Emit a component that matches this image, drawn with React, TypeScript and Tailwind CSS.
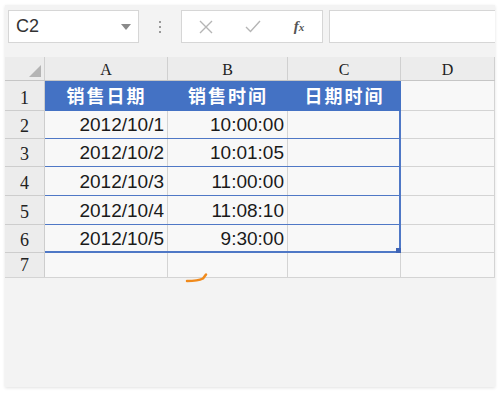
import React from "react";

const rows = [
  { n: "1", h: "h-[30px]", a: "销售日期", b: "销售时间", c: "日期时间", head: true },
  { n: "2", h: "h-[28px]", a: "2012/10/1", b: "10:00:00", c: "" },
  { n: "3", h: "h-[28px]", a: "2012/10/2", b: "10:01:05", c: "" },
  { n: "4", h: "h-[29px]", a: "2012/10/3", b: "11:00:00", c: "" },
  { n: "5", h: "h-[29px]", a: "2012/10/4", b: "11:08:10", c: "" },
  { n: "6", h: "h-[28px]", a: "2012/10/5", b: "9:30:00", c: "", last: true },
];

const sans = { fontFamily: '"Liberation Sans", Arial, sans-serif' };
const serif = { fontFamily: '"Liberation Serif", "DejaVu Serif", serif' };
const cjk = { fontFamily: '"Noto Sans CJK SC", "Noto Sans", sans-serif' };

export default function App() {
  return (
    <div className="w-[500px] h-[393px] bg-white pt-[5px] px-[5px]">
      <div className="relative w-[490px] h-[382px] bg-[#f3f3f3] shadow-[0_1px_3px_rgba(0,0,0,0.12)]">
        {/* toolbar */}
        <div className="flex items-start h-[52px] pt-[5px] pl-[3px]">
          <div className="w-[131px] h-[33px] bg-white border border-[#d6d6d6] flex items-center justify-between pl-[7px] pr-[7px]">
            <span className="text-[18px] text-[#333]" style={sans}>C2</span>
            <svg width="10" height="6" viewBox="0 0 10 6"><path d="M0 0h10L5 6z" fill="#8a8a8a" /></svg>
          </div>
          <div className="w-[42px] h-[33px] flex flex-col items-center justify-center gap-[3px]">
            <div className="w-[2px] h-[2px] bg-[#999]" />
            <div className="w-[2px] h-[2px] bg-[#999]" />
            <div className="w-[2px] h-[2px] bg-[#999]" />
          </div>
          <div className="w-[142px] h-[33px] bg-white border border-[#d6d6d6] flex items-center">
            <div className="w-[48px] flex justify-center">
              <svg width="14" height="14" viewBox="0 0 14 14"><path d="M1 1L13 13M13 1L1 13" stroke="#b5b5b5" strokeWidth="1.4" /></svg>
            </div>
            <div className="w-[46px] flex justify-center">
              <svg width="16" height="13" viewBox="0 0 16 13"><path d="M1 7L5.5 11.5L15 1" stroke="#b5b5b5" strokeWidth="1.4" fill="none" /></svg>
            </div>
            <div className="w-[46px] flex justify-center">
              <span className="italic text-[15px] text-[#555] font-semibold" style={serif}>f<span className="text-[11px]">x</span></span>
            </div>
          </div>
          <div className="ml-[6px] flex-1 h-[33px] bg-white border border-[#d6d6d6] border-r-0" />
        </div>

        {/* column headers */}
        <div className="flex h-[24px] bg-[#ececec] border-b border-[#c6c6c6]">
          <div className="w-[40px] h-full border-r border-[#d0d0d0] relative">
            <svg className="absolute right-[3px] bottom-[3px]" width="12" height="12" viewBox="0 0 12 12"><path d="M12 0V12H0z" fill="#b4b4b4" /></svg>
          </div>
          {[
            ["A", "w-[123px]"],
            ["B", "w-[120px]"],
            ["C", "w-[113px]"],
            ["D", "w-[94px]"],
          ].map(([l, w]) => (
            <div key={l} className={`${w} h-full border-r border-[#d0d0d0] flex items-center justify-center pt-[3px] text-[16px] text-[#222]`} style={serif}>
              {l}
            </div>
          ))}
        </div>

        {/* data rows */}
        {rows.map((r) => (
          <div key={r.n} className={`flex ${r.h}`}>
            <div className="w-[40px] h-full bg-[#ececec] border-r border-b border-[#cdcdcd] flex items-end justify-center leading-none pb-[3px] text-[18px] text-[#222]" style={serif}>
              {r.n}
            </div>
            {r.head ? (
              <div className="flex h-full bg-[#4472c4] border-b border-[#4472c4]">
                <div className="w-[123px] flex items-center justify-center text-white font-bold text-[18px] tracking-[2px]" style={cjk}>{r.a}</div>
                <div className="w-[120px] flex items-center justify-center text-white font-bold text-[18px] tracking-[2px]" style={cjk}>{r.b}</div>
                <div className="w-[113px] flex items-center justify-center text-white font-bold text-[18px] tracking-[2px]" style={cjk}>{r.c}</div>
              </div>
            ) : (
              <div className={`flex h-full bg-[#f8f8f8] border-b ${r.last ? "border-b-2" : ""} border-[#4f78c6]`}>
                <div className="w-[123px] h-full border-r border-[#d4d4d4] flex items-center justify-end pr-[3px] pt-[2px] text-[19px] text-[#1a1a1a]" style={sans}>{r.a}</div>
                <div className="w-[120px] h-full border-r border-[#d4d4d4] flex items-center justify-end pr-[3px] pt-[2px] text-[19px] text-[#1a1a1a]" style={sans}>{r.b}</div>
                <div className="relative w-[113px] h-full border-r-2 border-[#4f78c6]">
                  {r.last && <div className="absolute right-[-2px] bottom-[-2px] w-[5px] h-[5px] bg-[#3f64b5]" />}
                </div>
              </div>
            )}
            <div className="w-[94px] h-full bg-[#f8f8f8] border-r border-b border-[#d4d4d4]" />
          </div>
        ))}

        {/* row 7 */}
        <div className="flex h-[25px] border-b border-[#d4d4d4]">
          <div className="w-[40px] h-full bg-[#ececec] border-r border-[#cdcdcd] flex items-end justify-center leading-none pb-[3px] text-[18px] text-[#222]" style={serif}>7</div>
          <div className="w-[123px] h-full bg-[#f8f8f8] border-r border-[#d4d4d4]" />
          <div className="w-[120px] h-full bg-[#f8f8f8] border-r border-[#d4d4d4]" />
          <div className="w-[113px] h-full bg-[#f8f8f8] border-r border-[#d4d4d4]" />
          <div className="w-[94px] h-full bg-[#f8f8f8] border-r border-[#d4d4d4]" />
        </div>

        {/* orange mark */}
        <svg className="absolute left-[180px] top-[266px]" width="24" height="12" viewBox="0 0 24 12">
          <path d="M2 10C8 10 14 9.5 18 7.5L21 3.5" stroke="#f08a1c" strokeWidth="2.5" fill="none" strokeLinecap="round" />
        </svg>
      </div>
    </div>
  );
}
